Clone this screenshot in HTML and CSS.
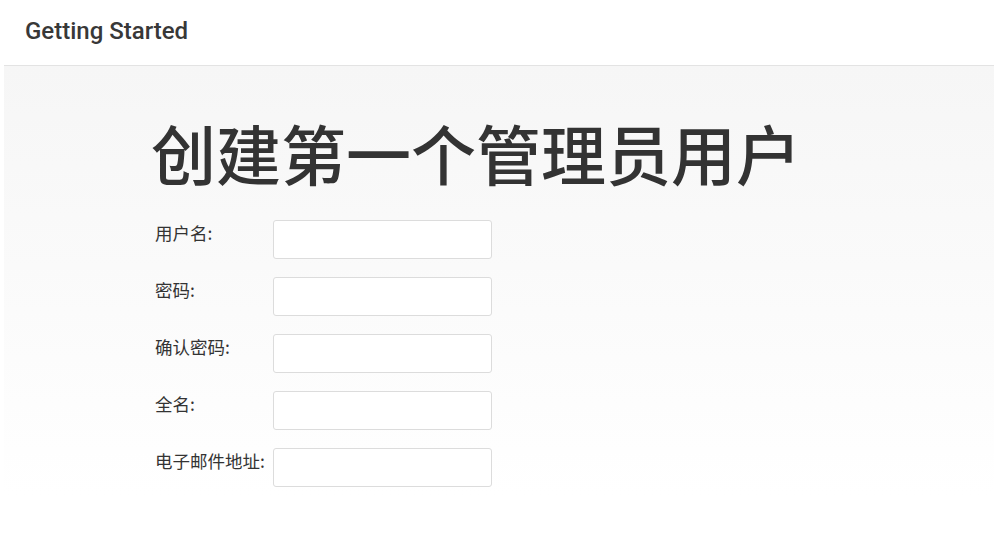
FILE: index.html
```html
<!DOCTYPE html>
<html lang="zh-CN">
<head>
<meta charset="utf-8">
<title>Getting Started</title>
<link rel="stylesheet" href="styles.css">
</head>
<body>
<div class="frame">
  <header class="topbar">
    <h1 class="brand">Getting Started</h1>
  </header>
  <main class="content">
    <h2 class="title">创建第一个管理员用户</h2>
    <form class="form">
      <div class="row">
        <label class="label" for="u">用户名:</label>
        <input class="field" id="u" type="text">
      </div>
      <div class="row">
        <label class="label" for="p">密码:</label>
        <input class="field" id="p" type="password">
      </div>
      <div class="row">
        <label class="label" for="p2">确认密码:</label>
        <input class="field" id="p2" type="password">
      </div>
      <div class="row">
        <label class="label" for="n">全名:</label>
        <input class="field" id="n" type="text">
      </div>
      <div class="row">
        <label class="label" for="e">电子邮件地址:</label>
        <input class="field" id="e" type="text">
      </div>
    </form>
  </main>
</div>
</body>
</html>
```

FILE: styles.css
```css
html, body {
  margin: 0;
  padding: 0;
  background: #ffffff;
  height: 100%;
}
body {
  font-family: "Noto Sans CJK SC", "Noto Sans", sans-serif;
  color: #333333;
}
.frame {
  padding: 0 5px 0 4px;
  height: 542px;
  display: flex;
  flex-direction: column;
  box-sizing: border-box;
}
.topbar {
  height: 66px;
  border-bottom: 1px solid #e3e3e3;
  display: flex;
  align-items: center;
  padding-left: 21px;
  box-sizing: border-box;
}
.brand {
  margin: 0;
  font-family: Roboto, "Liberation Sans", sans-serif;
  font-weight: 500;
  font-size: 24px;
  color: #383838;
  padding-bottom: 3px;
}
.content {
  flex: 1;
  background: linear-gradient(to bottom, #f6f6f6 0px, #fafafa 200px, #ffffff 430px);
  padding: 46px 0 0 147px;
}
.title {
  margin: 0;
  font-family: "Noto Sans CJK SC", sans-serif;
  font-weight: 500;
  font-size: 65px;
  line-height: 80px;
  color: #333333;
}
.form {
  margin-top: 28px;
  display: flex;
  flex-direction: column;
  gap: 18px;
}
.row {
  display: flex;
  align-items: flex-start;
}
.label {
  width: 122px;
  flex: none;
  font-size: 17.5px;
  line-height: 24px;
  padding-top: 1px;
  padding-left: 4px;
  box-sizing: border-box;
  color: #333333;
}
.field {
  width: 219px;
  height: 39px;
  box-sizing: border-box;
  border: 1px solid #dcdcdc;
  border-radius: 3px;
  background: #ffffff;
  margin: 0;
  padding: 4px 8px;
  font-size: 14px;
}
```
